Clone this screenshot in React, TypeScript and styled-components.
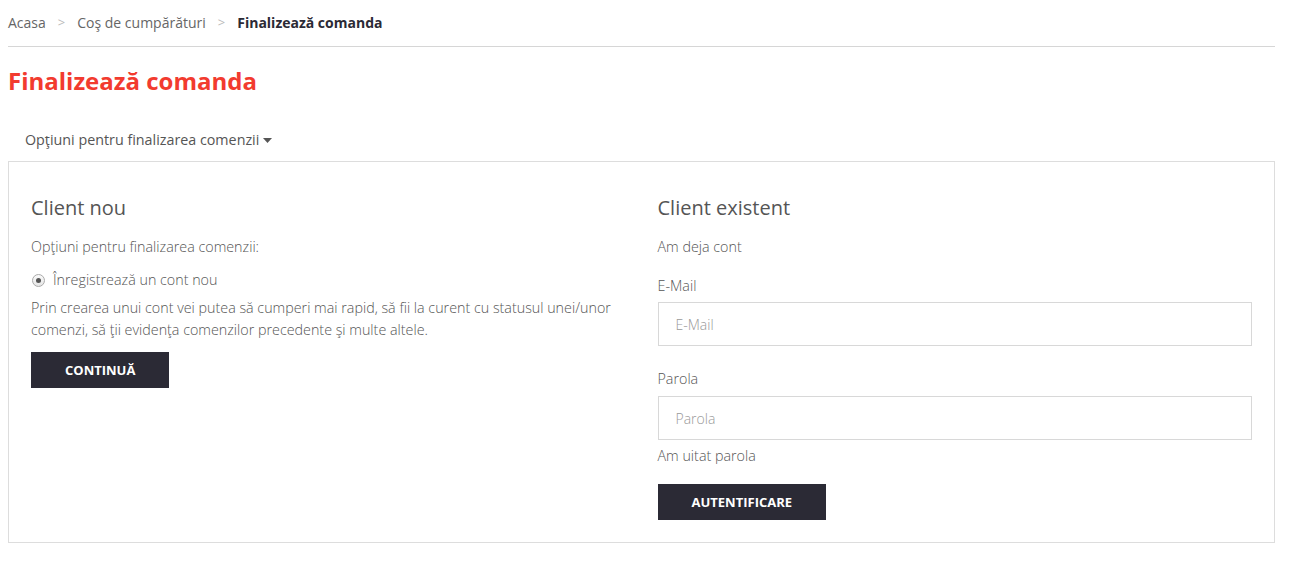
import React from "react";
import styled, { createGlobalStyle } from "styled-components";

const Global = createGlobalStyle`
  html, body { margin: 0; padding: 0; background: #fff; }
  body { font-family: "Open Sans", "Liberation Sans", sans-serif; font-size: 14px; color: #555; }
  * { box-sizing: border-box; }
`;

const Page = styled.div`
  width: 1267px;
  margin-left: 8px;
`;

const Breadcrumb = styled.nav`
  display: flex;
  align-items: center;
  height: 47px;
  padding-bottom: 2px;
  border-bottom: 1px solid #d6d6d6;
  font-size: 14px;
`;

const Crumb = styled.span<{ $active?: boolean }>`
  color: ${(p) => (p.$active ? "#2b2a35" : "#666")};
  font-weight: ${(p) => (p.$active ? 700 : 400)};
`;

const Sep = styled.span`
  color: #bbb;
  margin: 0 12px;
  font-size: 13px;
`;

const Title = styled.h1`
  margin: 18px 0 0;
  color: #f23b2f;
  font-size: 24px;
  font-weight: 700;
  line-height: 32px;
`;

const Toggle = styled.div`
  margin: 33px 0 0 17px;
  height: 20px;
  line-height: 20px;
  color: #555;
  font-size: 14.3px;
  display: flex;
  align-items: center;
  gap: 4px;
`;

const Panel = styled.div`
  margin-top: 11px;
  border: 1px solid #ddd;
  padding: 31px 22px 22px;
  display: grid;
  grid-template-columns: 1fr 1fr;
  column-gap: 32px;
`;

const Column = styled.div`
  display: flex;
  flex-direction: column;
  align-items: flex-start;
`;

const Heading = styled.h2`
  margin: 0;
  font-size: 20px;
  font-weight: 400;
  color: #555;
  line-height: 30px;
`;

const Text = styled.p<{ $mt?: number }>`
  margin: ${(p) => p.$mt ?? 0}px 0 0;
  line-height: 22px;
  font-size: 14.3px;
  font-weight: 300;
  color: #555;
`;

const RadioRow = styled.label`
  margin-top: 11px;
  display: flex;
  align-items: center;
  gap: 8px;
  line-height: 22px;
  font-size: 14.3px;
  font-weight: 300;
`;

const Radio = styled.span`
  width: 13px;
  height: 13px;
  border-radius: 50%;
  border: 1px solid #aaa;
  background: linear-gradient(#fafafa, #e6e6e6);
  display: inline-flex;
  align-items: center;
  justify-content: center;
  margin-left: 1px;
  &::after {
    content: "";
    width: 5px;
    height: 5px;
    border-radius: 50%;
    background: #555;
  }
`;

const Button = styled.button<{ $mt?: number }>`
  margin-top: ${(p) => p.$mt ?? 0}px;
  height: 36px;
  padding: 0 34px;
  border: 0;
  border-radius: 0;
  background: #2b2a35;
  color: #fff;
  font-family: "Open Sans", "Liberation Sans", sans-serif;
  font-size: 13px;
  font-weight: 700;
  text-transform: uppercase;
`;

const Label = styled.label<{ $mt?: number }>`
  margin-top: ${(p) => p.$mt ?? 0}px;
  line-height: 22px;
  font-size: 14.3px;
  font-weight: 300;
`;

const Input = styled.input<{ $mt?: number }>`
  margin-top: ${(p) => p.$mt ?? 5}px;
  width: 100%;
  height: 44px;
  border: 1px solid #d8d8d8;
  padding: 0 17px;
  font-family: "Open Sans", "Liberation Sans", sans-serif;
  font-size: 14px;
  font-weight: 300;
  color: #555;
  outline: none;
  &::placeholder { color: #999; }
`;

const Caret = () => (
  <svg width="9" height="5" viewBox="0 0 9 5">
    <path d="M0 0h9L4.5 5z" fill="#555" />
  </svg>
);

export default function App() {
  return (
    <>
      <Global />
      <Page>
        <Breadcrumb>
          <Crumb>Acasa</Crumb>
          <Sep>&gt;</Sep>
          <Crumb>Coş de cumpărături</Crumb>
          <Sep>&gt;</Sep>
          <Crumb $active>Finalizează comanda</Crumb>
        </Breadcrumb>
        <Title>Finalizează comanda</Title>
        <Toggle>
          Opţiuni pentru finalizarea comenzii <Caret />
        </Toggle>
        <Panel>
          <Column>
            <Heading>Client nou</Heading>
            <Text $mt={13}>Opţiuni pentru finalizarea comenzii:</Text>
            <RadioRow>
              <Radio />
              Înregistrează un cont nou
            </RadioRow>
            <Text $mt={6}>
              Prin crearea unui cont vei putea să cumperi mai rapid, să fii la curent cu statusul unei/unor comenzi,
              să ţii evidenţa comenzilor precedente şi multe altele.
            </Text>
            <Button $mt={11}>Continuă</Button>
          </Column>
          <Column>
            <Heading>Client existent</Heading>
            <Text $mt={13}>Am deja cont</Text>
            <Label $mt={17}>E-Mail</Label>
            <Input placeholder="E-Mail" />
            <Label $mt={22}>Parola</Label>
            <Input $mt={6} placeholder="Parola" />
            <Text $mt={5}>Am uitat parola</Text>
            <Button $mt={17}>Autentificare</Button>
          </Column>
        </Panel>
      </Page>
    </>
  );
}
